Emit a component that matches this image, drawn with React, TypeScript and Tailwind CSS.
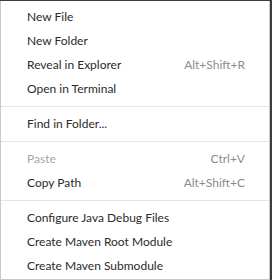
import React from "react";

type Item =
  | { kind: "item"; label: string; key?: string; disabled?: boolean }
  | { kind: "sep" };

const items: Item[] = [
  { kind: "item", label: "New File" },
  { kind: "item", label: "New Folder" },
  { kind: "item", label: "Reveal in Explorer", key: "Alt+Shift+R" },
  { kind: "item", label: "Open in Terminal" },
  { kind: "sep" },
  { kind: "item", label: "Find in Folder..." },
  { kind: "sep" },
  { kind: "item", label: "Paste", key: "Ctrl+V", disabled: true },
  { kind: "item", label: "Copy Path", key: "Alt+Shift+C" },
  { kind: "sep" },
  { kind: "item", label: "Configure Java Debug Files" },
  { kind: "item", label: "Create Maven Root Module" },
  { kind: "item", label: "Create Maven Submodule" },
];

export default function App() {
  return (
    <div className="w-[272px] h-[280px] bg-[#3c3c3c] pt-px overflow-hidden">
      <div
        className="w-[270px] h-[279px] bg-white border-l border-r border-b border-[#c8c8c8] pt-[4px] text-[12px] text-[#2b2b2b]"
        style={{ fontFamily: 'Lato, "Liberation Sans", sans-serif' }}
      >
        {items.map((it, i) =>
          it.kind === "sep" ? (
            <div key={i} className="h-[11px] pt-[5px]">
              <div className="h-px bg-[#e5e5e5]" />
            </div>
          ) : (
            <div
              key={i}
              className={`h-[24px] flex items-center justify-between pl-[26px] pr-[24px] ${
                it.disabled ? "text-[#a6a6a6]" : ""
              }`}
            >
              <span className="leading-none">{it.label}</span>
              {it.key && (
                <span className="leading-none text-[#8c8c8c]">{it.key}</span>
              )}
            </div>
          )
        )}
      </div>
    </div>
  );
}
